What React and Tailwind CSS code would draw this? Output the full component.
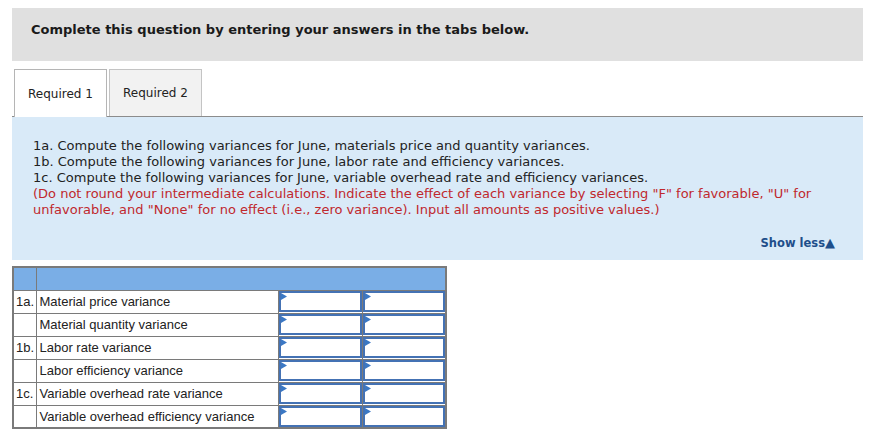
import React from 'react';

const rows = [
  { code: '1a.', label: 'Material price variance' },
  { code: '', label: 'Material quantity variance' },
  { code: '1b.', label: 'Labor rate variance' },
  { code: '', label: 'Labor efficiency variance' },
  { code: '1c.', label: 'Variable overhead rate variance' },
  { code: '', label: 'Variable overhead efficiency variance' },
];

// little blue flag marking a dropdown / input cell
const Flag = () => (
  <svg className="absolute left-0 top-0" width="7" height="8" viewBox="0 0 7 8">
    <path d="M0 0 L6 3.5 L0 7 Z" fill="#3b78c4" />
  </svg>
);

const InputCell = () => (
  <td className="border border-[#7a7a7a] p-0 h-[23px]">
    <div className="relative h-[21px] border-2 border-[#4472b4]">
      <Flag />
    </div>
  </td>
);

export default function App() {
  return (
    <div className="w-[878px] h-[433px] bg-white pt-2 pl-3 pr-[15px] font-['DejaVu_Sans',Verdana,sans-serif] text-[#222]">
      <div className="h-[53px] bg-[#e0e0e0] pt-[14px] pl-[19px] text-[13px] leading-[16px] font-bold text-[#1a1a1a]">
        Complete this question by entering your answers in the tabs below.
      </div>

      <div className="mt-2 flex items-end border-b border-[#8c8c8c] pl-[2px] gap-[2px] h-[48px]">
        <div className="h-[48px] w-[93px] -mb-px bg-white border border-b-0 border-[#b5b5b5] flex items-center justify-center text-[12px] text-[#222]">
          Required 1
        </div>
        <div className="h-[47px] w-[93px] bg-[#f2f2f2] border border-b-0 border-[#c4c4c4] flex items-center justify-center text-[12px] text-[#222]">
          Required 2
        </div>
      </div>

      <div className="h-[143px] bg-[#d9eaf8] pt-[21px] pl-[21px] pr-4 text-[13px] leading-[16px]">
        <p>1a. Compute the following variances for June, materials price and quantity variances.</p>
        <p>1b. Compute the following variances for June, labor rate and efficiency variances.</p>
        <p>1c. Compute the following variances for June, variable overhead rate and efficiency variances.</p>
        <p className="text-[#c0282d]">
          (Do not round your intermediate calculations. Indicate the effect of each variance by selecting "F" for favorable, "U" for unfavorable, and "None" for no effect (i.e., zero variance). Input all amounts as positive values.)
        </p>
        <div className="flex justify-end mt-[17px] pr-[12px]">
          <span className="text-[11.5px] font-bold text-[#1f4e8a]">
            Show less<span className="text-[13px]">▲</span>
          </span>
        </div>
      </div>

      <table className="mt-[6px] w-[433px] table-fixed border-collapse border-2 border-[#7a7a7a] font-['Liberation_Sans',Arial,sans-serif] text-[13px] text-[#222]">
        <colgroup>
          <col className="w-[23px]" />
          <col className="w-[242px]" />
          <col className="w-[84px]" />
          <col className="w-[84px]" />
        </colgroup>
        <thead>
          <tr className="h-[23px] bg-[#7aaee6]">
            <th className="border border-[#7a7a7a]"></th>
            <th colSpan={3} className="border border-[#7a7a7a]"></th>
          </tr>
        </thead>
        <tbody>
          {rows.map((r, i) => (
            <tr key={i} className="h-[23px]">
              <td className="border border-[#7a7a7a] px-[2px] text-left whitespace-nowrap">{r.code}</td>
              <td className="border border-[#7a7a7a] px-[3px] whitespace-nowrap">{r.label}</td>
              <InputCell />
              <InputCell />
            </tr>
          ))}
        </tbody>
      </table>
    </div>
  );
}
